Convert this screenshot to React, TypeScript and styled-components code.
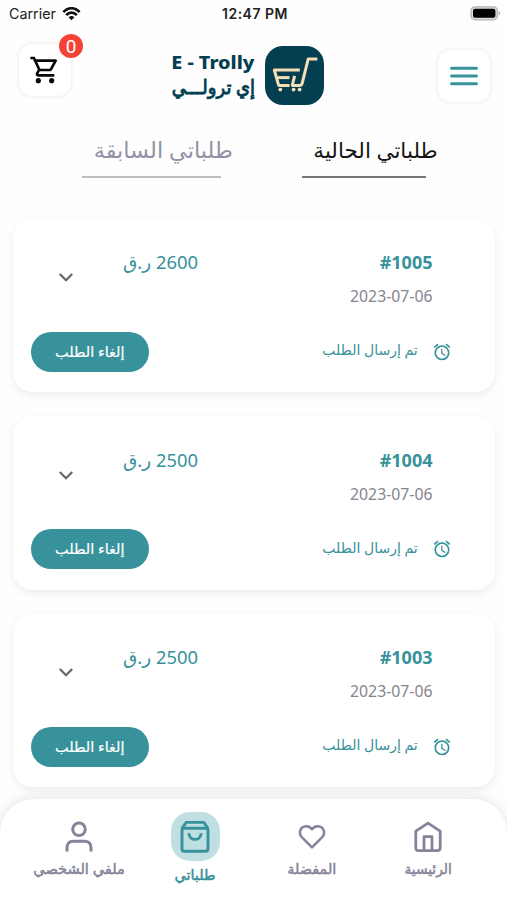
import React from "react";
import styled, { createGlobalStyle } from "styled-components";

const teal = "#37929b";
const grey = "#84849a";
const navy = "#033f50";

const Global = createGlobalStyle`
  * { box-sizing: border-box; }
  html, body { margin: 0; padding: 0; background: #fefefe; }
  body { overflow: hidden; font-family: "Noto Sans", "DejaVu Sans", sans-serif; }
  button { font: inherit; border: 0; padding: 0; background: none; }
`;

const Screen = styled.div`
  width: 507px;
  height: 900px;
  display: flex;
  flex-direction: column;
  overflow: hidden;
  background: #fefefe;
`;

const StatusBar = styled.div`
  height: 27px;
  flex: none;
  display: grid;
  grid-template-columns: 1fr auto 1fr;
  align-items: center;
  padding: 0 6px 0 9px;
  font-family: Inter, "Liberation Sans", sans-serif;
  font-size: 14.3px;
  color: #222;
`;
const Carrier = styled.div`
  display: flex;
  align-items: center;
  gap: 6px;
`;
const Clock = styled.div`
  font-weight: 600;
  font-size: 14px;
  letter-spacing: 0.5px;
`;
const BatterySlot = styled.div`
  display: flex;
  justify-content: flex-end;
`;

const Header = styled.header`
  height: 93px;
  flex: none;
  display: flex;
  justify-content: space-between;
  align-items: flex-start;
  padding: 16px 16px 0 18px;
`;
const Tile = styled.button<{ $drop?: number }>`
  position: relative;
  width: 54px;
  height: 54px;
  margin-top: ${(p) => p.$drop ?? 0}px;
  display: flex;
  align-items: center;
  justify-content: center;
  border-radius: 14px;
  background: #fff;
  border: 1px solid #f5f5f5;
  box-shadow: 0 0 3px 1px rgba(0, 0, 0, 0.04);
`;
const Badge = styled.span`
  position: absolute;
  right: -12px;
  top: -10px;
  width: 24px;
  height: 24px;
  border-radius: 50%;
  background: #f44336;
  color: #fff;
  font: 19px/25px Roboto, sans-serif;
  text-align: center;
`;
const Brand = styled.div`
  display: flex;
  gap: 10px;
  padding-top: 3px;
  margin-right: 14px;
`;
const BrandText = styled.div`
  width: 84px;
  padding-top: 2px;
  color: ${navy};
  display: flex;
  flex-direction: column;
  align-items: center;
`;

const Label = styled.span<{
  $size: number;
  $color?: string;
  $weight?: number;
  $line?: number;
  $sx?: number;
  $stroke?: number;
}>`
  display: block;
  flex: none;
  white-space: nowrap;
  font-size: ${(p) => p.$size}px;
  line-height: ${(p) => p.$line ?? 24}px;
  font-weight: ${(p) => p.$weight ?? 400};
  color: ${(p) => p.$color ?? "inherit"};
  transform: scaleX(${(p) => p.$sx ?? 1});
  -webkit-text-stroke: ${(p) => p.$stroke ?? 0}px currentColor;
`;

const Tabs = styled.nav`
  height: 98.5px;
  flex: none;
  display: flex;
  justify-content: space-between;
  padding: 14px 81px 0 82px;
`;
const Tab = styled.div<{ $width: number; $line: string }>`
  width: ${(p) => p.$width}px;
  height: 44px;
  display: flex;
  justify-content: center;
  padding-left: 23px;
  border-bottom: 2px solid ${(p) => p.$line};
`;

const Orders = styled.main`
  flex: 1;
  min-height: 0;
  display: flex;
  flex-direction: column;
  gap: 24px;
  padding: 0 12px 0 13px;
`;
const Card = styled.article`
  height: 173.5px;
  flex: none;
  display: flex;
  flex-direction: column;
  justify-content: space-between;
  padding: 31.5px 43px 20.5px 18px;
  background: #fff;
  border-radius: 20px;
  box-shadow: 0 3px 8px rgba(0, 0, 0, 0.07);
`;
const Summary = styled.div`
  display: flex;
  align-items: flex-start;
`;
const Toggle = styled.button`
  margin: 15px 0 0 22.5px;
  width: 24px;
  height: 24px;
`;
const Price = styled.div`
  width: 74px;
  margin-left: 46px;
  display: flex;
  justify-content: center;
`;
const Ident = styled.div`
  margin-left: auto;
  margin-right: 19.5px;
  display: flex;
  flex-direction: column;
  align-items: flex-end;
  gap: 10px;
`;
const Actions = styled.div`
  display: flex;
  justify-content: space-between;
  align-items: center;
`;
const CancelButton = styled.button`
  width: 118px;
  height: 40px;
  border-radius: 20px;
  background: ${teal};
  color: #fff;
  display: flex;
  align-items: center;
  justify-content: center;
`;
const Status = styled.div`
  display: flex;
  align-items: center;
  gap: 13px;
  color: ${teal};
`;
const StatusText = styled.div`
  width: 98px;
  height: 27px;
  display: flex;
  justify-content: center;
`;

const BottomNav = styled.nav`
  position: relative;
  height: 101px;
  flex: none;
  display: grid;
  grid-template-columns: repeat(4, 116.5px);
  justify-content: center;
  padding-top: 13px;
  background: #fff;
  border-radius: 34px 34px 0 0;
  box-shadow: 0 0 14px rgba(0, 0, 0, 0.12);
`;
const NavItem = styled.div`
  display: flex;
  flex-direction: column;
  align-items: center;
`;
const NavIcon = styled.div<{ $active?: boolean }>`
  width: 49px;
  height: 49px;
  margin-bottom: ${(p) => (p.$active ? 2 : -4)}px;
  display: flex;
  align-items: center;
  justify-content: center;
  border-radius: 19px;
  background: ${(p) => (p.$active ? "#c0dfe3" : "transparent")};
`;

const WifiIcon = () => (
  <svg width="19" height="14" viewBox="0 0 19 14" fill="none" stroke="#111" strokeWidth="2.6">
    <path d="M1.4 5.2C6-.1 13-.1 17.6 5.2" />
    <path d="M4.2 8.2c3-3.4 7.6-3.4 10.6 0" />
    <path d="M9.5 13.2 6.6 10.3c1.7-1.6 4.1-1.6 5.8 0z" fill="#111" stroke="none" />
  </svg>
);
const BatteryIcon = () => (
  <svg width="31" height="15" viewBox="0 0 31 15">
    <rect x="1" y=".8" width="26.4" height="13" rx="4" fill="#ddd" stroke="#b4b4b4" strokeWidth="1.3" />
    <rect x="3" y="2.8" width="22.4" height="9" rx="2" fill="#000" />
    <path d="M28.7 5.2c2 .7 2 3.5 0 4.2z" fill="#a9a9a9" />
  </svg>
);
const CartIcon = () => (
  <svg width="32" height="32" viewBox="0 0 24 24" fill="#080808">
    <path d="M15.55 13c.75 0 1.41-.41 1.75-1.03l3.58-6.49A.996.996 0 0 0 20.01 4H5.21l-.94-2H1v2h2l3.6 7.59-1.35 2.44C4.52 15.37 5.48 17 7 17h12v-2H7l1.1-2zM6.16 6h12.15l-2.76 5H8.53zM7 18c-1.1 0-1.99.9-1.99 2S5.9 22 7 22s2-.9 2-2-.9-2-2-2m10 0c-1.1 0-1.99.9-1.99 2s.89 2 1.99 2 2-.9 2-2-.9-2-2-2" />
  </svg>
);
const LogoMark = () => (
  <svg width="59" height="59" viewBox="0 0 59 59">
    <rect width="59" height="59" rx="18" fill={navy} />
    <g fill="none" stroke="#f6dfb4" strokeWidth="3" strokeLinejoin="round">
      <path d="M34.8 24H9.3l4.4 15.4h10.8" />
      <path d="M12.5 31.6h12" />
      <path d="M29.6 29.8l-2.3 9.6h7.4c1.4 0 2.1-.6 2.5-2.2L43.2 13h9.2" />
    </g>
    <g fill="#f6dfb4">
      <circle cx="15.3" cy="43.6" r="1.9" />
      <circle cx="28.6" cy="43.6" r="1.9" />
      <circle cx="34.6" cy="43.6" r="1.9" />
    </g>
  </svg>
);
const MenuIcon = () => (
  <svg width="30" height="22" viewBox="0 0 30 22" stroke={teal} strokeWidth="3" strokeLinecap="round">
    <path d="M2.5 3.2h25M2.5 11h25M2.5 18.8h25" />
  </svg>
);
const ChevronIcon = () => (
  <svg width="24" height="24" viewBox="0 0 24 24" fill="none" stroke="#686868" strokeWidth="2.3">
    <path d="M5.8 9 12 15.2 18.2 9" />
  </svg>
);
const AlarmIcon = () => (
  <svg width="20" height="20" viewBox="0 0 24 24" fill={teal}>
    <path d="m22 5.72-4.6-3.86-1.29 1.53 4.6 3.86zM7.88 3.39 6.6 1.86 2 5.71l1.29 1.53zM12.5 8H11v6l4.75 2.85.75-1.23-4-2.37zM12 4c-4.97 0-9 4.03-9 9s4.02 9 9 9a9 9 0 0 0 0-18m0 16c-3.87 0-7-3.13-7-7s3.13-7 7-7 7 3.13 7 7-3.13 7-7 7" />
  </svg>
);
const PersonIcon = () => (
  <svg width="30" height="34" viewBox="0 0 30 34" fill="none" stroke={grey} strokeWidth="3">
    <circle cx="15" cy="9.3" r="6.3" />
    <path d="M3 31.5v-4c0-4 2.5-6.3 6.3-6.3h11.4c3.8 0 6.3 2.3 6.3 6.3v4" />
  </svg>
);
const BagIcon = () => (
  <svg width="30" height="34" viewBox="0 0 30 34" fill="none" stroke={teal} strokeWidth="2.9" strokeLinejoin="round">
    <path d="M2 8.3 6.2 2.4h17.6L28 8.3" />
    <rect x="2" y="8.3" width="26" height="23" rx="2.2" />
    <path d="M8.9 13.2c0 8.2 12.2 8.2 12.2 0" />
  </svg>
);
const HeartIcon = () => (
  <svg width="28" height="26" viewBox="0 0 30 28" fill="none" stroke={grey} strokeWidth="2.7" strokeLinejoin="round">
    <path d="M15 25.2 4.2 14.5C-.3 9.4 2.6 2.8 8.6 2.5c2.8-.1 4.8 1.2 6.4 3.2 1.6-2 3.6-3.3 6.4-3.2 6 .3 8.9 6.9 4.4 12z" />
  </svg>
);
const HomeIcon = () => (
  <svg width="30" height="32" viewBox="0 0 30 32" fill="none" stroke={grey} strokeWidth="2.8" strokeLinejoin="round">
    <path d="M2.8 10.2 15 2.2l12.2 8v16.6c0 1.9-.8 2.8-2.8 2.8H5.6c-2 0-2.8-.9-2.8-2.8z" />
    <path d="M11 29V15.7h8V29" />
  </svg>
);

const orders = [
  { id: "#1005", price: "2600", date: "2023-07-06" },
  { id: "#1004", price: "2500", date: "2023-07-06" },
  { id: "#1003", price: "2500", date: "2023-07-06" },
];

const OrderCard = ({ id, price, date }: { id: string; price: string; date: string }) => (
  <Card>
    <Summary>
      <Toggle aria-label="التفاصيل"><ChevronIcon /></Toggle>
      <Price>
        <Label dir="rtl" $size={18.4} $color={teal}>{price} ر.ق</Label>
      </Price>
      <Ident>
        <Label $size={18} $weight={700} $color={teal}>{id}</Label>
        <Label $size={15.8} $color="#85858d">{date}</Label>
      </Ident>
    </Summary>
    <Actions>
      <CancelButton><Label dir="rtl" $size={14} $sx={1.03} $stroke={0.2}>إلغاء الطلب</Label></CancelButton>
      <Status>
        <StatusText><Label dir="rtl" $size={14}>تم إرسال الطلب</Label></StatusText>
        <AlarmIcon />
      </Status>
    </Actions>
  </Card>
);

const NavLabel = ({ active, sx, children }: { active?: boolean; sx?: number; children: string }) => (
  <Label dir="rtl" $size={14} $stroke={0.5} $sx={sx} $color={active ? teal : grey}>{children}</Label>
);

export default function App() {
  return (
    <Screen>
      <Global />
      <StatusBar>
        <Carrier>Carrier <WifiIcon /></Carrier>
        <Clock>12:47 PM</Clock>
        <BatterySlot><BatteryIcon /></BatterySlot>
      </StatusBar>
      <Header>
        <Tile aria-label="السلة"><CartIcon /><Badge>0</Badge></Tile>
        <Brand>
          <BrandText>
            <Label $size={18.5} $weight={800} $line={27} $sx={1.07}>E - Trolly</Label>
            <Label dir="rtl" $size={19.5} $line={23} $stroke={0.9} $sx={0.92}>إي ترولـــي</Label>
          </BrandText>
          <LogoMark />
        </Brand>
        <Tile $drop={6} aria-label="القائمة"><MenuIcon /></Tile>
      </Header>
      <Tabs>
        <Tab $width={139} $line="#bdbdc1"><Label dir="rtl" $size={22} $line={30} $sx={1.02} $color="#9292a4">طلباتي السابقة</Label></Tab>
        <Tab $width={124} $line="#777"><Label dir="rtl" $size={21.5} $line={31} $color="#151515">طلباتي الحالية</Label></Tab>
      </Tabs>
      <Orders>
        {orders.map((o) => <OrderCard key={o.id} {...o} />)}
      </Orders>
      <BottomNav>
        <NavItem><NavIcon><PersonIcon /></NavIcon><NavLabel sx={1.04}>ملفي الشخصي</NavLabel></NavItem>
        <NavItem><NavIcon $active><BagIcon /></NavIcon><NavLabel active sx={1.03}>طلباتي</NavLabel></NavItem>
        <NavItem><NavIcon><HeartIcon /></NavIcon><NavLabel sx={1.03}>المفضلة</NavLabel></NavItem>
        <NavItem><NavIcon><HomeIcon /></NavIcon><NavLabel sx={0.98}>الرئيسية</NavLabel></NavItem>
      </BottomNav>
    </Screen>
  );
}
